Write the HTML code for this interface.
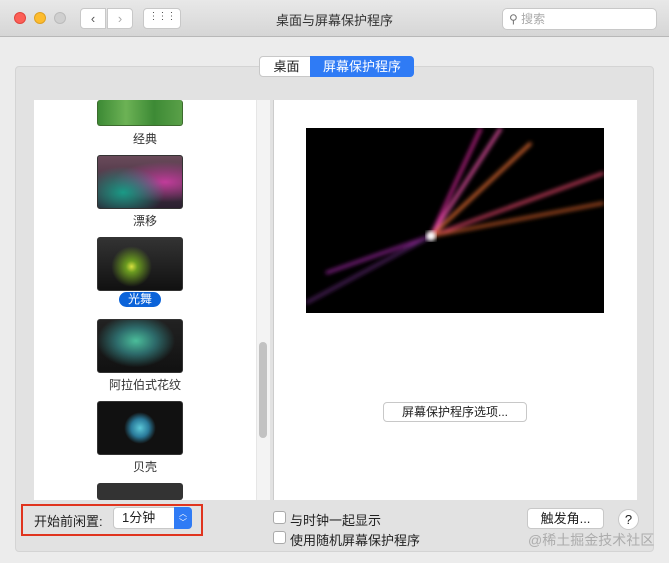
<!DOCTYPE html>
<html><head><meta charset="utf-8"><style>
*{box-sizing:border-box;margin:0;padding:0}
body{width:669px;height:563px;background:#ececec;font-family:"Liberation Sans","Noto Sans CJK SC",sans-serif;font-size:13px;color:#222;position:relative;overflow:hidden}
.abs{position:absolute}
.tb{left:0;top:0;width:669px;height:37px;background:linear-gradient(#e8e8e8,#d6d6d6);border-bottom:1px solid #b8b8b8}
.dot{width:12px;height:12px;border-radius:50%;top:12px}
.btn{background:#fff;border:1px solid #c8c8c8;border-radius:4px}
.thumb{left:97px;width:86px;height:54px;border-radius:3px;border:1px solid #333}
.lbl{width:222px;left:34px;text-align:center;font-size:12px;color:#333}
.cb{width:13px;height:13px;border:1px solid #aaa;border-radius:3px;background:#fff}
</style></head><body>
<div class="abs tb"></div>
<div class="abs dot" style="left:14px;background:#fc5f57;border:1px solid #e0443e"></div>
<div class="abs dot" style="left:34px;background:#fdbc2e;border:1px solid #dea123"></div>
<div class="abs dot" style="left:54px;background:#cfcfcf;border:1px solid #bbb"></div>
<div class="abs btn" style="left:80px;top:8px;width:26px;height:21px;border-radius:4px 0 0 4px;text-align:center;line-height:19px;color:#555">&#8249;</div>
<div class="abs btn" style="left:107px;top:8px;width:26px;height:21px;border-radius:0 4px 4px 0;text-align:center;line-height:19px;color:#aaa">&#8250;</div>
<div class="abs btn" style="left:143px;top:8px;width:38px;height:21px;text-align:center;line-height:16px;font-size:10px;letter-spacing:-1px;color:#555">⋮⋮⋮</div>
<div class="abs" style="left:0;width:669px;top:10px;text-align:center;font-size:13px;color:#333">桌面与屏幕保护程序</div>
<div class="abs btn" style="left:502px;top:8px;width:155px;height:22px;border-radius:5px;color:#aaa;font-size:12px;line-height:20px;padding-left:6px"><span style="color:#777">&#9906;</span> 搜索</div>
<div class="abs" style="left:15px;top:66px;width:639px;height:486px;background:#e2e2e2;border:1px solid #d4d4d4;border-radius:4px"></div>
<div class="abs btn" style="left:259px;top:56px;width:55px;height:21px;border-radius:4px 0 0 4px;text-align:center;line-height:19px">桌面</div>
<div class="abs" style="left:310px;top:56px;width:104px;height:21px;background:#2f7bf5;color:#fff;border-radius:0 4px 4px 0;text-align:center;line-height:21px">屏幕保护程序</div>
<div class="abs" style="left:34px;top:100px;width:222px;height:400px;background:#fff"></div>
<div class="abs" style="left:256px;top:100px;width:14px;height:400px;background:#f3f3f3;border-left:1px solid #e6e6e6"></div>
<div class="abs" style="left:259px;top:342px;width:8px;height:96px;background:#c2c2c2;border-radius:4px"></div>
<div class="abs" style="left:273px;top:100px;width:364px;height:400px;background:#fff;border-left:1px solid #ccc"></div>
<div class="abs thumb" style="top:100px;height:26px;border-top:none;background:linear-gradient(90deg,#3d8a35,#6cb255,#3d8a35,#5aa048);border-color:#3d6b2e"></div>
<div class="abs lbl" style="top:130px">经典</div>
<div class="abs thumb" style="top:155px;background:radial-gradient(ellipse at 30% 70%,#1a9a86,transparent 50%),radial-gradient(ellipse at 80% 50%,#c03c9a,transparent 55%),linear-gradient(#6a4a5a,#2a2030)"></div>
<div class="abs lbl" style="top:212px">漂移</div>
<div class="abs thumb" style="top:237px;background:radial-gradient(circle at 40% 55%,#d8e040 0,#6a9a20 10%,transparent 35%),linear-gradient(#333,#111)"></div>
<div class="abs" style="left:119px;top:292px;width:42px;height:15px;background:#0b63d9;border-radius:8px;color:#fff;font-size:12px;text-align:center;line-height:15px">光舞</div>
<div class="abs thumb" style="top:319px;background:radial-gradient(ellipse at 45% 40%,#4bbd9a,#2d6a6a 30%,transparent 60%),linear-gradient(#222,#111)"></div>
<div class="abs lbl" style="top:376px">阿拉伯式花纹</div>
<div class="abs thumb" style="top:401px;background:radial-gradient(circle at 50% 50%,#5cc8d8 0,#2a7a9a 18%,#111 32%),#111"></div>
<div class="abs lbl" style="top:458px">贝壳</div>
<div class="abs thumb" style="top:483px;height:17px;border-bottom:none;background:#333"></div>
<svg class="abs" style="left:306px;top:128px" width="298" height="185"><rect width="298" height="185" fill="#000"/>
<defs><filter id="b"><feGaussianBlur stdDeviation="2"/></filter></defs>
<g filter="url(#b)" stroke-width="3" fill="none">
<path d="M125 108 L175 0" stroke="#c0208a"/><path d="M125 108 L195 0" stroke="#e050a0"/>
<path d="M125 108 L225 15" stroke="#e06a30"/><path d="M125 108 L298 45" stroke="#d04060"/>
<path d="M125 108 L298 75" stroke="#b05020"/><path d="M125 108 L20 145" stroke="#8a2090"/>
<path d="M125 108 L0 175" stroke="#502060"/></g>
<circle cx="125" cy="108" r="5" fill="#fff" filter="url(#b)"/></svg>
<div class="abs btn" style="left:383px;top:402px;width:144px;height:20px;text-align:center;line-height:18px;font-size:12px">屏幕保护程序选项...</div>
<div class="abs" style="left:21px;top:504px;width:182px;height:32px;border:2px solid #e0341e"></div>
<div class="abs" style="left:34px;top:511px">开始前闲置:</div>
<div class="abs btn" style="left:113px;top:507px;width:79px;height:22px;padding-left:8px;line-height:20px">1分钟</div>
<div class="abs" style="left:174px;top:507px;width:18px;height:22px;background:#2f7bf5;border-radius:0 4px 4px 0;color:#fff;font-size:8px;text-align:center;line-height:9px;padding-top:2px">︿<br>﹀</div>
<div class="abs cb" style="left:273px;top:511px"></div>
<div class="abs" style="left:290px;top:510px">与时钟一起显示</div>
<div class="abs cb" style="left:273px;top:531px"></div>
<div class="abs" style="left:290px;top:530px">使用随机屏幕保护程序</div>
<div class="abs btn" style="left:527px;top:508px;width:77px;height:21px;text-align:center;line-height:19px">触发角...</div>
<div class="abs btn" style="left:618px;top:509px;width:21px;height:21px;border-radius:50%;text-align:center;line-height:19px;font-size:13px">?</div>
<div class="abs" style="left:528px;top:530px;color:rgba(150,150,150,.7);font-size:14px">@稀土掘金技术社区</div>
</body></html>
